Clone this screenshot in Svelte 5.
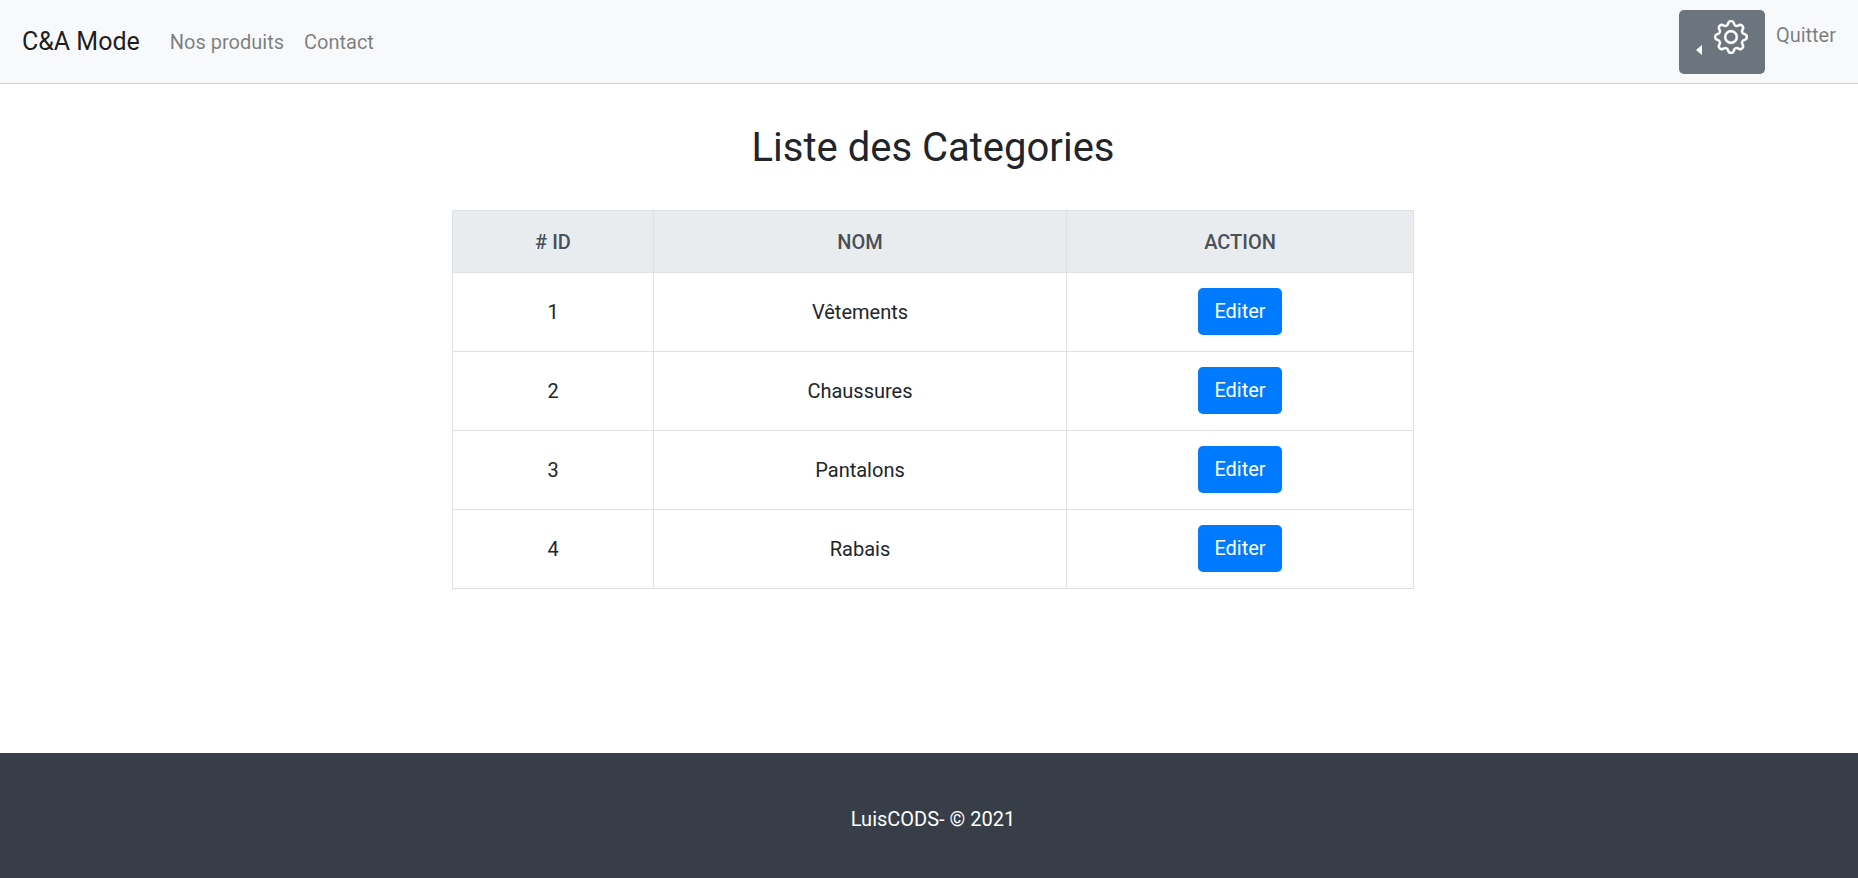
<script lang="ts">
  const categories = [
    { id: 1, nom: "Vêtements" },
    { id: 2, nom: "Chaussures" },
    { id: 3, nom: "Pantalons" },
    { id: 4, nom: "Rabais" },
  ];
</script>

<div class="page">
  <nav class="navbar">
    <a class="brand" href="#top">C&amp;A Mode</a>
    <a class="nav-link" href="#top">Nos produits</a>
    <a class="nav-link" href="#top">Contact</a>

    <div class="nav-right">
      <button class="settings" aria-label="Paramètres">
        <span class="caret"></span>
        <svg class="gear" viewBox="0 0 16 16" fill="currentColor" stroke="currentColor" stroke-width="0.2">
          <path d="M8 4.754a3.246 3.246 0 1 0 0 6.492 3.246 3.246 0 0 0 0-6.492zM5.754 8a2.246 2.246 0 1 1 4.492 0 2.246 2.246 0 0 1-4.492 0z" />
          <path d="M9.796 1.343c-.527-1.79-3.065-1.79-3.592 0l-.094.319a.873.873 0 0 1-1.255.52l-.292-.16c-1.64-.892-3.433.902-2.54 2.541l.159.292a.873.873 0 0 1-.52 1.255l-.319.094c-1.79.527-1.79 3.065 0 3.592l.319.094a.873.873 0 0 1 .52 1.255l-.16.292c-.892 1.64.901 3.434 2.541 2.54l.292-.159a.873.873 0 0 1 1.255.52l.094.319c.527 1.79 3.065 1.79 3.592 0l.094-.319a.873.873 0 0 1 1.255-.52l.292.16c1.64.893 3.434-.902 2.54-2.541l-.159-.292a.873.873 0 0 1 .52-1.255l.319-.094c1.79-.527 1.79-3.065 0-3.592l-.319-.094a.873.873 0 0 1-.52-1.255l.16-.292c.893-1.64-.902-3.433-2.541-2.54l-.292.159a.873.873 0 0 1-1.255-.52l-.094-.319zm-2.633.283c.246-.835 1.428-.835 1.674 0l.094.319a1.873 1.873 0 0 0 2.693 1.115l.291-.16c.764-.415 1.6.42 1.184 1.185l-.159.292a1.873 1.873 0 0 0 1.116 2.692l.318.094c.835.246.835 1.428 0 1.674l-.319.094a1.873 1.873 0 0 0-1.115 2.693l.16.291c.415.764-.42 1.6-1.185 1.184l-.291-.159a1.873 1.873 0 0 0-2.693 1.116l-.094.318c-.246.835-1.428.835-1.674 0l-.094-.319a1.873 1.873 0 0 0-2.692-1.115l-.292.16c-.764.415-1.6-.42-1.184-1.185l.159-.291A1.873 1.873 0 0 0 1.945 8.93l-.319-.094c-.835-.246-.835-1.428 0-1.674l.319-.094A1.873 1.873 0 0 0 3.06 4.377l-.16-.292c-.415-.764.42-1.6 1.185-1.184l.292.159a1.873 1.873 0 0 0 2.692-1.115l.094-.319z" />
        </svg>
      </button>
      <a class="nav-link quit" href="#top">Quitter</a>
    </div>
  </nav>

  <main class="content">
    <h1>Liste des Categories</h1>
    <table>
      <thead>
        <tr>
          <th class="col-id"># ID</th>
          <th class="col-nom">NOM</th>
          <th>ACTION</th>
        </tr>
      </thead>
      <tbody>
        {#each categories as cat (cat.id)}
          <tr>
            <td>{cat.id}</td>
            <td>{cat.nom}</td>
            <td><button class="btn-edit">Editer</button></td>
          </tr>
        {/each}
      </tbody>
    </table>
  </main>

  <footer>
    <p>LuisCODS- © 2021</p>
  </footer>
</div>

<style>
  :global(body) {
    margin: 0;
    overflow: hidden;
  }
  .page {
    height: 878px;
    display: flex;
    flex-direction: column;
    font-family: Roboto, "Liberation Sans", sans-serif;
    font-size: 20px;
    color: #212529;
    background: #fff;
  }

  .navbar {
    height: 83px;
    flex: 0 0 83px;
    display: flex;
    align-items: center;
    padding: 0 22px;
    background: #f8f9fa;
    border-bottom: 1px solid #cfd0d1;
  }
  .brand {
    font-size: 25px;
    color: rgba(0, 0, 0, 0.9);
    text-decoration: none;
    margin-right: 30px;
  }
  .nav-link {
    font-size: 20px;
    color: rgba(0, 0, 0, 0.5);
    text-decoration: none;
    margin-right: 20px;
  }
  .nav-right {
    margin-left: auto;
    display: flex;
    align-items: flex-start;
    gap: 11px;
  }
  .quit {
    margin: 13px 0 0;
  }
  .settings {
    width: 86px;
    height: 64px;
    padding: 10px 0 0 35px;
    display: flex;
    align-items: flex-start;
    border: 0;
    border-radius: 5px;
    background: #6c757d;
    color: #fff;
    position: relative;
  }
  .caret {
    position: absolute;
    left: 17px;
    top: 35px;
    border-top: 5px solid transparent;
    border-bottom: 5px solid transparent;
    border-right: 6px solid #fff;
  }
  .gear {
    width: 34px;
    height: 34px;
  }

  .content {
    flex: 1;
    padding-left: 8px;
    display: flex;
    flex-direction: column;
    align-items: center;
  }
  h1 {
    margin: 40px 0 38px;
    font-size: 40px;
    font-weight: 400;
    line-height: 48px;
    color: #212529;
  }
  table {
    width: 962px;
    border-collapse: collapse;
    table-layout: fixed;
    text-align: center;
  }
  th,
  td {
    border: 1px solid #dee2e6;
    padding: 0;
  }
  th {
    height: 61px;
    background: #e9ecef;
    color: #495057;
    font-weight: 500;
  }
  td {
    height: 78px;
  }
  .col-id {
    width: 200px;
  }
  .col-nom {
    width: 412px;
  }
  .btn-edit {
    display: block;
    margin: 0 auto 2px;
    width: 84px;
    height: 47px;
    border: 0;
    border-radius: 5px;
    background: #007bff;
    color: #fff;
    font: inherit;
  }

  footer {
    flex: 0 0 125px;
    box-sizing: border-box;
    padding: 7px 0 0 8px;
    display: flex;
    align-items: center;
    justify-content: center;
    background: #373e48;
    color: #fff;
  }
  footer p {
    margin: 0;
  }
</style>
